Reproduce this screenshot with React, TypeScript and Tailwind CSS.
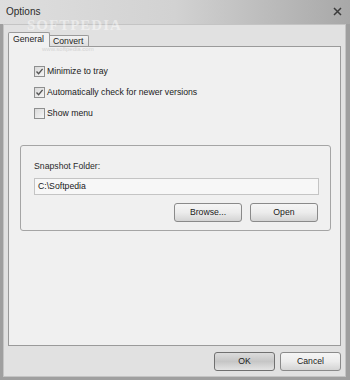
const font = { fontFamily: "'Liberation Sans', Arial, sans-serif" };

function Check({ checked, label }: { checked: boolean; label: string }) {
  return (
    <div className="flex items-center h-[21px]">
      <span className="w-[11px] h-[11px] border border-[#8e8f8f] bg-gradient-to-br from-[#d9d9d9] to-[#f6f6f6] flex items-center justify-center">
        {checked && (
          <svg width="9" height="9" viewBox="0 0 9 9">
            <path d="M1.5 4.6 L3.6 6.8 L7.6 1.9" fill="none" stroke="#555" strokeWidth="1.4" />
          </svg>
        )}
      </span>
      <span className="ml-[2px] text-[8.7px] text-[#1a1a1a]">{label}</span>
    </div>
  );
}

function Btn({ label, w, focus }: { label: string; w: string; focus?: boolean }) {
  return (
    <div
      className={`${w} h-[19px] rounded-[3px] border flex items-center justify-center text-[8.7px] text-[#1a1a1a] ${
        focus
          ? "border-[#707070] bg-gradient-to-b from-[#dcdcdc] via-[#c6c6c6] to-[#e4e4e4]"
          : "border-[#8a8a8a] bg-gradient-to-b from-[#f5f5f5] via-[#ececec] to-[#d4d4d4]"
      }`}
    >
      {label}
    </div>
  );
}

export default function App() {
  return (
    <div className="relative w-[350px] h-[380px] bg-[#9f9f9f] flex flex-col" style={font}>
      <div className="h-[24px] bg-gradient-to-r from-[#dedede] via-[#d2d2d2] to-[#a8a8a8] flex items-center pl-[6px] pr-[8px] pb-[2px]">
        <span className="text-[10px] text-[#2b2b2b]">Options</span>
        <svg className="ml-auto" width="9" height="9" viewBox="0 0 9 9">
          <path d="M1 1 L8 8 M8 1 L1 8" stroke="#3b3b3b" strokeWidth="1.5" />
        </svg>
      </div>
      <div className="flex-1 ml-[3px] mr-[4px] mb-[3px] border border-[#c4c4c4] bg-[#e1e1e1] flex flex-col px-[4px]">
        <div className="flex items-end h-[14px] mt-[7px]">
          <div className="h-[15px] w-[42px] border border-b-0 border-[#9a9a9a] bg-[#f1f1f1] rounded-t-[2px] text-[8.7px] text-[#1e1e1e] pl-[4px] leading-[12px] relative z-10 -mb-px">
            General
          </div>
          <div className="h-[11px] w-[39px] border border-b-0 border-l-0 border-[#9a9a9a] bg-gradient-to-b from-[#f3f3f3] to-[#dedede] rounded-tr-[2px] text-[8.7px] text-[#1e1e1e] pl-[3px] leading-[11px]">
            Convert
          </div>
        </div>
        <div className="h-[300px] border border-[#9a9a9a] bg-[#f0f0f0] flex flex-col pt-[14px] pl-[11px] pr-[9px]">
          <div className="pl-[14px]">
            <Check checked label="Minimize to tray" />
            <Check checked label="Automatically check for newer versions" />
            <Check checked={false} label="Show menu" />
          </div>
          <div className="mt-[21px] h-[86px] border border-[#a5a5a5] rounded-[3px] flex flex-col pl-[13px] pr-[11px] pt-[15px]">
            <span className="text-[8.7px] text-[#2a2a2a] leading-[11px]">Snapshot Folder:</span>
            <div className="mt-[6px] h-[17px] border border-[#c4c4c4] bg-[#f7f7f7] text-[8.7px] text-[#1a1a1a] pl-[3px] leading-[15px]">
              C:\Softpedia
            </div>
            <div className="mt-[8px] flex justify-end gap-[8px] pr-[1px]">
              <Btn label="Browse..." w="w-[68px]" />
              <Btn label="Open" w="w-[68px]" />
            </div>
          </div>
        </div>
        <div className="mt-[6px] flex justify-end gap-[5px]">
          <Btn label="OK" w="w-[61px]" focus />
          <Btn label="Cancel" w="w-[61px]" />
        </div>
      </div>
      <span
        className="absolute left-[27px] top-[18px] text-[15px] font-bold tracking-[1px] text-white/45 leading-none pointer-events-none"
        style={{ fontFamily: "'Liberation Serif', serif" }}
      >
        SOFTPEDIA
      </span>
      <span className="absolute left-[42px] top-[46px] text-[6px] text-[#d4d4d4] leading-none pointer-events-none">
        www.softpedia.com
      </span>
    </div>
  );
}
